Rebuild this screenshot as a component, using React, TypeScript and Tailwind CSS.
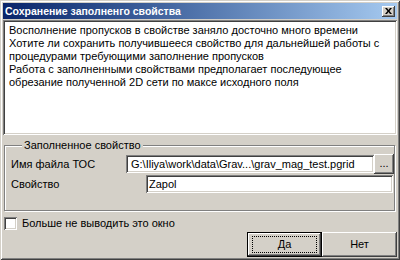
const face = 'bg-[#d4d0c8]';

function Sunken({ className, children }: { className?: string; children?: React.ReactNode }) {
  return (
    <div
      className={`bg-white shadow-[inset_1px_1px_#808080,inset_-1px_-1px_#ffffff,inset_2px_2px_#404040,inset_-2px_-2px_#d4d0c8] ${className ?? ''}`}
    >
      {children}
    </div>
  );
}

export default function App() {
  return (
    <div
      className={`w-[400px] h-[260px] ${face} p-[3px] flex flex-col text-[11px] text-black shadow-[inset_1px_1px_#d4d0c8,inset_-1px_-1px_#404040,inset_2px_2px_#ffffff,inset_-2px_-2px_#808080]`}
      style={{ fontFamily: '"Liberation Sans", Arial, sans-serif' }}
    >
      {/* заголовок */}
      <div className="h-[16px] flex items-center justify-between pl-[2px] pr-[2px] bg-gradient-to-r from-[#0a246a] to-[#a6caf0]">
        <span className="text-white font-bold text-[10.5px] leading-none">Сохранение заполненго свойства</span>
        <div className="w-[13px] h-[11px] bg-[#d4d0c8] flex items-center justify-center shadow-[inset_-1px_-1px_#404040,inset_1px_1px_#ffffff,inset_-2px_-2px_#808080]">
          <svg width="7" height="6" viewBox="0 0 7 6">
            <path d="M0 0h2l1.5 2L5 0h2L4.5 3 7 6H5L3.5 4 2 6H0l2.5-3z" fill="#000" />
          </svg>
        </div>
      </div>

      {/* сообщение */}
      <Sunken className="mt-px h-[115px] pl-[6px] pt-[4px] leading-[13px] whitespace-nowrap">
        <p>Восполнение пропусков в свойстве заняло досточно много времени</p>
        <p>Хотите ли сохранить получившееся свойство для дальнейшей работы с</p>
        <p>процедурами требующими заполнение пропусков</p>
        <p>Работа с заполненными свойствами предполагает последующее</p>
        <p>обрезание полученной 2D сети по максе исходного поля</p>
      </Sunken>

      {/* группа */}
      <fieldset className="mt-[4px] ml-px w-[389px] h-[72px] border border-[#808080] shadow-[inset_1px_1px_#ffffff,1px_1px_#ffffff] pl-[6px]">
        <legend className={`ml-[11px] px-[2px] ${face} leading-[13px]`}>Заполненное свойство</legend>
        <div className="flex items-center h-[20px] mt-[2px]">
          <span className="w-[115px]">Имя файла ТОС</span>
          <Sunken className="w-[248px] h-[18px] flex items-center pl-[5px] overflow-hidden whitespace-nowrap">
            G:\Iliya\work\data\Grav...\grav_mag_test.pgrid
          </Sunken>
          <div className="w-[20px] h-[20px] flex items-center justify-center bg-[#d4d0c8] shadow-[inset_-1px_-1px_#404040,inset_1px_1px_#ffffff,inset_-2px_-2px_#808080] leading-none pb-[2px]">
            ...
          </div>
        </div>
        <div className="flex items-center h-[18px] mt-px">
          <span className="w-[135px]">Свойство</span>
          <Sunken className="w-[247px] h-[18px] flex items-center pl-[3px]">Zapol</Sunken>
        </div>
      </fieldset>

      {/* флажок */}
      <label className="mt-[6px] ml-px flex items-center gap-[5px] h-[13px]">
        <Sunken className="w-[13px] h-[13px]" />
        Больше не выводить это окно
      </label>

      {/* кнопки */}
      <div className="mt-[2px] flex justify-end">
        <button className="w-[75px] h-[25px] bg-[#d4d0c8] border border-black shadow-[inset_-1px_-1px_#404040,inset_1px_1px_#ffffff,inset_-2px_-2px_#808080] flex items-center justify-center">
          <span className="w-[63px] h-[15px] outline outline-1 outline-dotted outline-black flex items-center justify-center">Да</span>
        </button>
        <button className="w-[75px] h-[25px] bg-[#d4d0c8] shadow-[inset_-1px_-1px_#404040,inset_1px_1px_#ffffff,inset_-2px_-2px_#808080]">
          Нет
        </button>
      </div>
    </div>
  );
}
